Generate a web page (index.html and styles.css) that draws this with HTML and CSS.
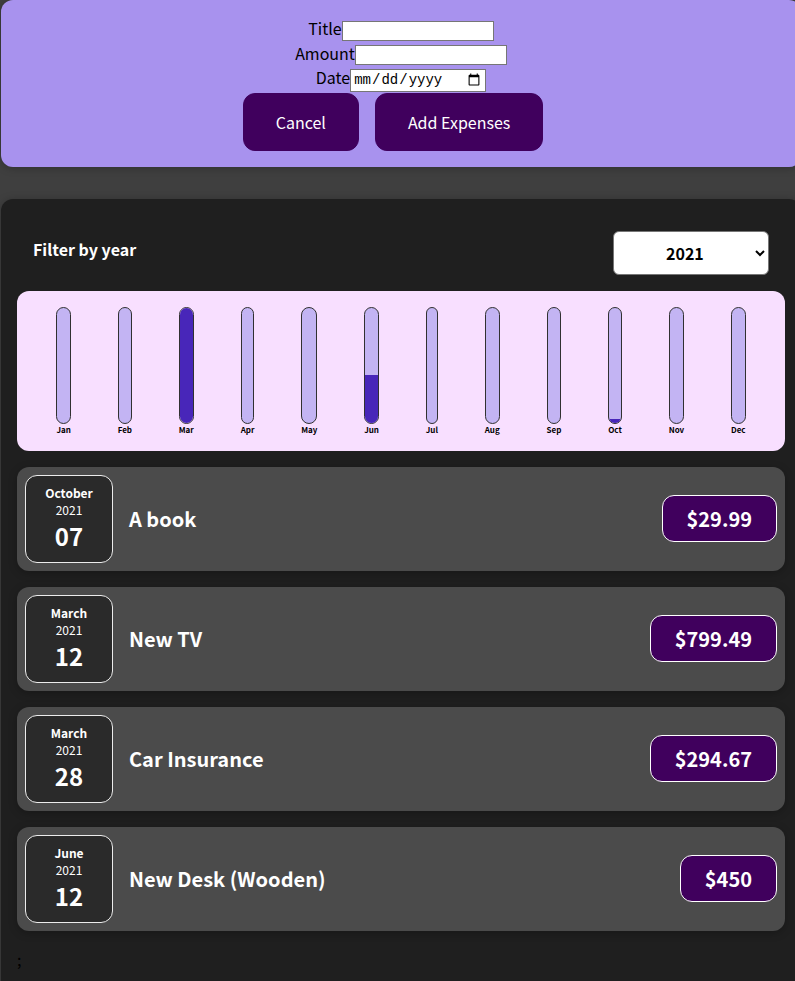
FILE: index.html
```html
<!DOCTYPE html>
<html lang="en">
<head>
<meta charset="utf-8">
<title>Expenses</title>
<link rel="stylesheet" href="styles.css">
</head>
<body>
<div class="new-expense">
  <form class="expense-form">
    <div class="control"><label>Title</label><input class="text-input" type="text"></div>
    <div class="control"><label>Amount</label><input class="text-input" type="number" min="0.01" step="0.01"></div>
    <div class="control"><label>Date</label><input class="date-input" type="date" min="2019-01-01" max="2022-12-31"></div>
    <div class="actions"><button type="button">Cancel</button><button type="submit">Add Expenses</button></div>
  </form>
</div>
<div class="expenses">
  <div class="filter">
    <div class="filter-control">
      <label>Filter by year</label>
      <select>
        <option value="2022">2022</option>
        <option value="2021" selected>2021</option>
        <option value="2020">2020</option>
        <option value="2019">2019</option>
      </select>
    </div>
  </div>
  <div class="chart">
    <div class="chart-bar"><div class="bar-inner"><div class="bar-fill" style="height:0%"></div></div><div class="bar-label">Jan</div></div>
    <div class="chart-bar"><div class="bar-inner"><div class="bar-fill" style="height:0%"></div></div><div class="bar-label">Feb</div></div>
    <div class="chart-bar"><div class="bar-inner"><div class="bar-fill" style="height:100%"></div></div><div class="bar-label">Mar</div></div>
    <div class="chart-bar"><div class="bar-inner"><div class="bar-fill" style="height:0%"></div></div><div class="bar-label">Apr</div></div>
    <div class="chart-bar"><div class="bar-inner"><div class="bar-fill" style="height:0%"></div></div><div class="bar-label">May</div></div>
    <div class="chart-bar"><div class="bar-inner"><div class="bar-fill" style="height:41%"></div></div><div class="bar-label">Jun</div></div>
    <div class="chart-bar"><div class="bar-inner"><div class="bar-fill" style="height:0%"></div></div><div class="bar-label">Jul</div></div>
    <div class="chart-bar"><div class="bar-inner"><div class="bar-fill" style="height:0%"></div></div><div class="bar-label">Aug</div></div>
    <div class="chart-bar"><div class="bar-inner"><div class="bar-fill" style="height:0%"></div></div><div class="bar-label">Sep</div></div>
    <div class="chart-bar"><div class="bar-inner"><div class="bar-fill" style="height:3%"></div></div><div class="bar-label">Oct</div></div>
    <div class="chart-bar"><div class="bar-inner"><div class="bar-fill" style="height:0%"></div></div><div class="bar-label">Nov</div></div>
    <div class="chart-bar"><div class="bar-inner"><div class="bar-fill" style="height:0%"></div></div><div class="bar-label">Dec</div></div>
  </div>
  <ul class="expense-list">
    <li class="expense-item">
      <div class="expense-date"><div class="date-month">October</div><div class="date-year">2021</div><div class="date-day">07</div></div>
      <div class="expense-desc"><h2>A book</h2><div class="expense-price">$29.99</div></div>
    </li>
    <li class="expense-item">
      <div class="expense-date"><div class="date-month">March</div><div class="date-year">2021</div><div class="date-day">12</div></div>
      <div class="expense-desc"><h2>New TV</h2><div class="expense-price">$799.49</div></div>
    </li>
    <li class="expense-item">
      <div class="expense-date"><div class="date-month">March</div><div class="date-year">2021</div><div class="date-day">28</div></div>
      <div class="expense-desc"><h2>Car Insurance</h2><div class="expense-price">$294.67</div></div>
    </li>
    <li class="expense-item">
      <div class="expense-date"><div class="date-month">June</div><div class="date-year">2021</div><div class="date-day">12</div></div>
      <div class="expense-desc"><h2>New Desk (Wooden)</h2><div class="expense-price">$450</div></div>
    </li>
  </ul>
  <div class="stray">;</div>
</div>
</body>
</html>
```
FILE: styles.css
```css
* { box-sizing: border-box; }
html { font-family: "Noto Sans CJK JP", "Noto Sans", sans-serif; }
body {
  margin: 0;
  background-color: #3f3f3f;
  overflow-x: hidden;
}
.new-expense {
  background-color: #a892ee;
  padding: 1rem;
  margin: 0 0 2rem 1px;
  width: 800px;
  border-radius: 12px;
  text-align: center;
  box-shadow: 0 1px 8px rgba(0, 0, 0, 0.25);
}
.expense-form { margin: 0; }
.control label { font-size: 16px; }
.text-input {
  width: 152px;
  height: 20px;
  font-size: 13.33px;
  border: 1px solid #767676;
  padding: 1px 2px;
}
.date-input {
  width: 136px;
  height: 23px;
  font-family: "Liberation Mono", "DejaVu Sans Mono", monospace;
  font-size: 14px;
  border: 1px solid #767676;
  padding: 1px 2px;
}
.actions { margin-top: 1px; }
.actions button {
  font: inherit;
  cursor: pointer;
  padding: 1rem 2rem;
  border: 1px solid #40005d;
  background-color: #40005d;
  color: white;
  border-radius: 12px;
  margin-right: 1rem;
}
.expenses {
  margin: 0 0 0 1px;
  width: 800px;
  min-height: 800px;
  padding: 1rem;
  background-color: #1f1f1f;
  border-radius: 12px;
  box-shadow: 0 1px 8px rgba(0, 0, 0, 0.25);
}
.filter { color: white; padding: 0 1rem; }
.filter-control {
  display: flex;
  width: 100%;
  align-items: center;
  justify-content: space-between;
  margin: 1rem 0;
}
.filter-control label { font-weight: bold; margin-bottom: 0.5rem; }
.filter-control select {
  font: inherit;
  padding: 0.5rem 3rem;
  font-weight: bold;
  border-radius: 6px;
  background-color: #ffffff;
  color: #000;
  border: 1px solid #767676;
}
.chart {
  padding: 1rem;
  border-radius: 12px;
  background-color: #f8dfff;
  text-align: center;
  display: flex;
  justify-content: space-around;
  height: 10rem;
}
.chart-bar {
  height: 100%;
  display: flex;
  flex-direction: column;
  align-items: center;
}
.bar-inner {
  height: 100%;
  width: 100%;
  border: 1px solid #313131;
  border-radius: 12px;
  background-color: #c3b4f3;
  overflow: hidden;
  display: flex;
  flex-direction: column;
  justify-content: flex-end;
}
.bar-fill { background-color: #4826b9; width: 100%; }
.bar-label { font-weight: bold; font-size: 0.5rem; text-align: center; }
.expense-list { list-style: none; padding: 0; margin: 0; }
.expense-item {
  display: flex;
  justify-content: space-between;
  align-items: center;
  box-shadow: 0 2px 8px rgba(0, 0, 0, 0.25);
  padding: 0.5rem;
  margin: 1rem 0;
  border-radius: 12px;
  background-color: #4b4b4b;
}
.expense-date {
  display: flex;
  flex-direction: column;
  width: 5.5rem;
  height: 5.5rem;
  border: 1px solid #ececec;
  background-color: #2a2a2a;
  color: white;
  border-radius: 12px;
  align-items: center;
  justify-content: center;
}
.date-month { font-size: 0.75rem; font-weight: bold; }
.date-year { font-size: 0.75rem; }
.date-day { font-size: 1.5rem; font-weight: bold; }
.expense-desc {
  display: flex;
  flex-direction: row;
  align-items: center;
  justify-content: flex-start;
  flex: 1;
}
.expense-desc h2 {
  font-size: 1.25rem;
  flex: 1;
  margin: 0 1rem;
  color: white;
}
.expense-price {
  font-size: 1.25rem;
  font-weight: bold;
  color: white;
  background-color: #40005d;
  border: 1px solid white;
  padding: 0.5rem 1.5rem;
  border-radius: 12px;
}
.stray { color: #000; }
```
